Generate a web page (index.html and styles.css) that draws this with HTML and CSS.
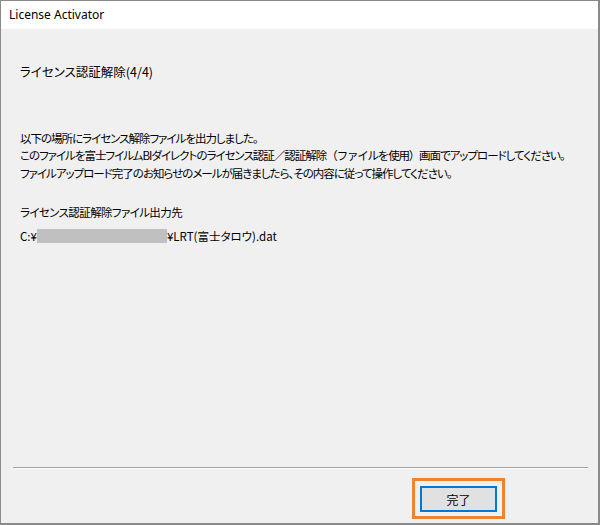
FILE: index.html
```html
<!DOCTYPE html>
<html lang="ja">
<head>
    <meta charset="UTF-8">
    <meta name="viewport" content="width=device-width, initial-scale=1.0">
    <title>License Activator</title>
    <link rel="stylesheet" href="styles.css">
</head>
<body>
    <div class="window">
        <div class="titlebar">License Activator</div>
        <div class="content">
            <p class="step">ライセンス認証解除(4/4)</p>
            <p class="message">
                以下の場所にライセンス解除ファイルを出力しました。<br>
                このファイルを富士フイルムBIダイレクトのライセンス認証／認証解除<span class="wide">（ファイルを使用）</span>画面でアップロードしてください。<br>
                ファイルアップロード完了のお知らせのメールが届きましたら、その内容に従って操作してください。
            </p>
            <p class="label">ライセンス認証解除ファイル出力先</p>
            <p class="path">C:¥<span class="masked"></span>¥LRT(富士タロウ).dat</p>
        </div>
        <div class="footer">
            <div class="separator"></div>
            <div class="buttons">
                <span class="highlight"><button class="btn">完了</button></span>
            </div>
        </div>
    </div>
</body>
</html>
```

FILE: styles.css
```css
* {
    box-sizing: border-box;
}
body {
    margin: 0;
    background: #fff;
}
.window {
    width: 600px;
    height: 525px;
    display: flex;
    flex-direction: column;
    border-style: solid;
    border-color: #8a8a8a;
    border-width: 1px 2px 2px 1px;
    background: #f0f0f0;
    font-family: "Noto Sans CJK JP", "Noto Sans", sans-serif;
    color: #000;
}
.titlebar {
    height: 28px;
    background: #fff;
    padding-left: 8px;
    line-height: 28px;
    font-family: "Noto Sans", "Open Sans", sans-serif;
    font-size: 12px;
    color: #000;
}
.content {
    flex: 1;
    padding: 34px 10px 0 19px;
    font-size: 11.5px;
    font-feature-settings: "palt";
}
.content p {
    margin: 0;
    line-height: 17.5px;
    white-space: nowrap;
}
.step {
    font-size: 12.5px;
    margin-bottom: 49px !important;
}
.message {
    letter-spacing: -1px;
    margin-bottom: 22px !important;
}
.message .wide {
    font-feature-settings: normal;
    letter-spacing: -1.2px;
}
.label {
    letter-spacing: -0.6px;
    margin-bottom: 6px !important;
}
.path {
    display: flex;
    align-items: center;
}
.masked {
    display: inline-block;
    width: 130px;
    height: 14px;
    background: #c0c0c0;
}
.separator {
    margin: 0 10px 0 12px;
    height: 2px;
    border-top: 1px solid #a0a0a0;
    border-bottom: 1px solid #fff;
}
.buttons {
    display: flex;
    justify-content: flex-end;
    padding: 9px 93px 4px 0;
}
.highlight {
    display: block;
    border: 3px solid #f0832c;
    padding: 5px 5px 4px 5px;
}
.btn {
    display: block;
    width: 77px;
    height: 26px;
    border: 2px solid #0078d7;
    background: #e1e1e1;
    font-family: "Noto Sans CJK JP", sans-serif;
    font-size: 12px;
    color: #000;
    padding: 0;
}
```
